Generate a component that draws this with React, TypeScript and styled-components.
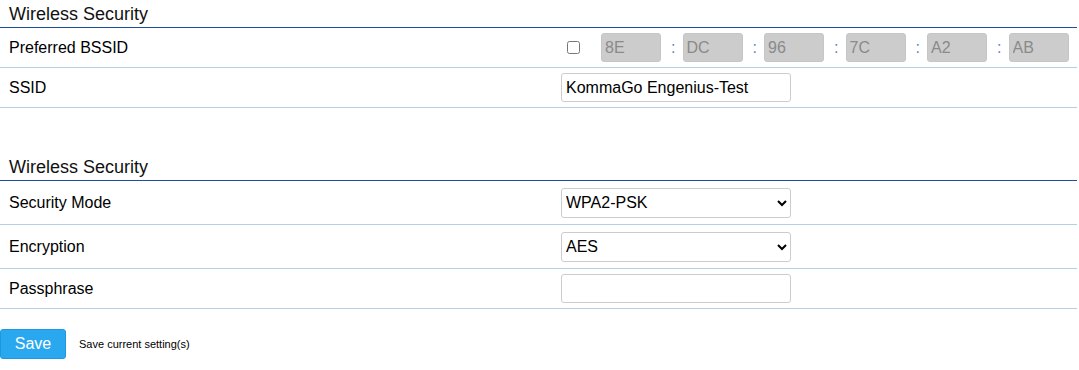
import React from "react";
import styled, { createGlobalStyle } from "styled-components";

const Global = createGlobalStyle`
  html, body { margin: 0; padding: 0; background: #fff; }
  body { font-family: "Liberation Sans", Arial, sans-serif; color: #000; }
`;

const Page = styled.div`
  width: 1077px;
`;

const Section = styled.section<{ $gap?: number }>`
  margin-top: ${(p) => p.$gap ?? 0}px;
`;

const Title = styled.h2`
  margin: 0;
  height: 27px;
  line-height: 29px;
  padding-left: 9px;
  font-size: 18px;
  font-weight: normal;
  color: #111;
  border-bottom: 1px solid #1f4c9b;
`;

const Row = styled.div<{ $tall?: boolean }>`
  display: grid;
  grid-template-columns: 561px 1fr;
  align-items: center;
  height: ${(p) => (p.$tall ? 43 : 39)}px;
  border-bottom: 1px solid #b6d0e3;
`;

const Label = styled.div`
  padding-left: 9px;
  font-size: 16px;
  color: #000;
`;

const Field = styled.div`
  display: flex;
  align-items: center;
`;

const Check = styled.input`
  width: 13px;
  height: 13px;
  margin: 0 21px 0 6px;
`;

const MacBox = styled.input`
  box-sizing: border-box;
  width: 60px;
  height: 29px;
  padding: 0 3px;
  background: #cccccc;
  border: 1px solid #c6c6c6;
  border-radius: 3px;
  color: #8a8a8a;
  font: 16px "Liberation Sans", Arial, sans-serif;
`;

const Colon = styled.span`
  width: 21.5px;
  box-sizing: border-box;
  padding-left: 3px;
  text-align: center;
  font-size: 16px;
  color: #5a86bd;
`;

const TextInput = styled.input`
  box-sizing: border-box;
  width: 230px;
  height: 29px;
  padding: 0 4px;
  border: 1px solid #cccccc;
  border-radius: 3px;
  background: #fff;
  color: #000;
  font: 16px "Liberation Sans", Arial, sans-serif;
  outline: none;
`;

const Select = styled.select`
  box-sizing: border-box;
  width: 230px;
  height: 30px;
  padding: 0;
  border: 1px solid #cccccc;
  border-radius: 3px;
  background: #fff;
  color: #000;
  font: 16px "Liberation Sans", Arial, sans-serif;
`;

const Footer = styled.div`
  display: flex;
  align-items: center;
  gap: 13px;
  margin-top: 20px;
`;

const SaveButton = styled.button`
  box-sizing: border-box;
  width: 66px;
  height: 30px;
  padding: 0;
  background: #2aa8ef;
  border: 1px solid #1e98dd;
  border-radius: 3px;
  color: #fff;
  font: 16px "Liberation Sans", Arial, sans-serif;
`;

const Note = styled.span`
  font-size: 11px;
  color: #000;
`;

const mac = ["8E", "DC", "96", "7C", "A2", "AB"];

export default function App() {
  return (
    <Page>
      <Global />
      <Section>
        <Title>Wireless Security</Title>
        <Row>
          <Label>Preferred BSSID</Label>
          <Field>
            <Check type="checkbox" />
            {mac.map((m, i) => (
              <React.Fragment key={i}>
                {i > 0 && <Colon>:</Colon>}
                <MacBox value={m} disabled readOnly />
              </React.Fragment>
            ))}
          </Field>
        </Row>
        <Row>
          <Label>SSID</Label>
          <Field>
            <TextInput defaultValue="KommaGo Engenius-Test" />
          </Field>
        </Row>
      </Section>
      <Section $gap={45}>
        <Title>Wireless Security</Title>
        <Row $tall>
          <Label>Security Mode</Label>
          <Field>
            <Select defaultValue="WPA2-PSK">
              <option>WPA2-PSK</option>
            </Select>
          </Field>
        </Row>
        <Row $tall>
          <Label>Encryption</Label>
          <Field>
            <Select defaultValue="AES">
              <option>AES</option>
            </Select>
          </Field>
        </Row>
        <Row>
          <Label>Passphrase</Label>
          <Field>
            <TextInput type="password" />
          </Field>
        </Row>
      </Section>
      <Footer>
        <SaveButton>Save</SaveButton>
        <Note>Save current setting(s)</Note>
      </Footer>
    </Page>
  );
}
